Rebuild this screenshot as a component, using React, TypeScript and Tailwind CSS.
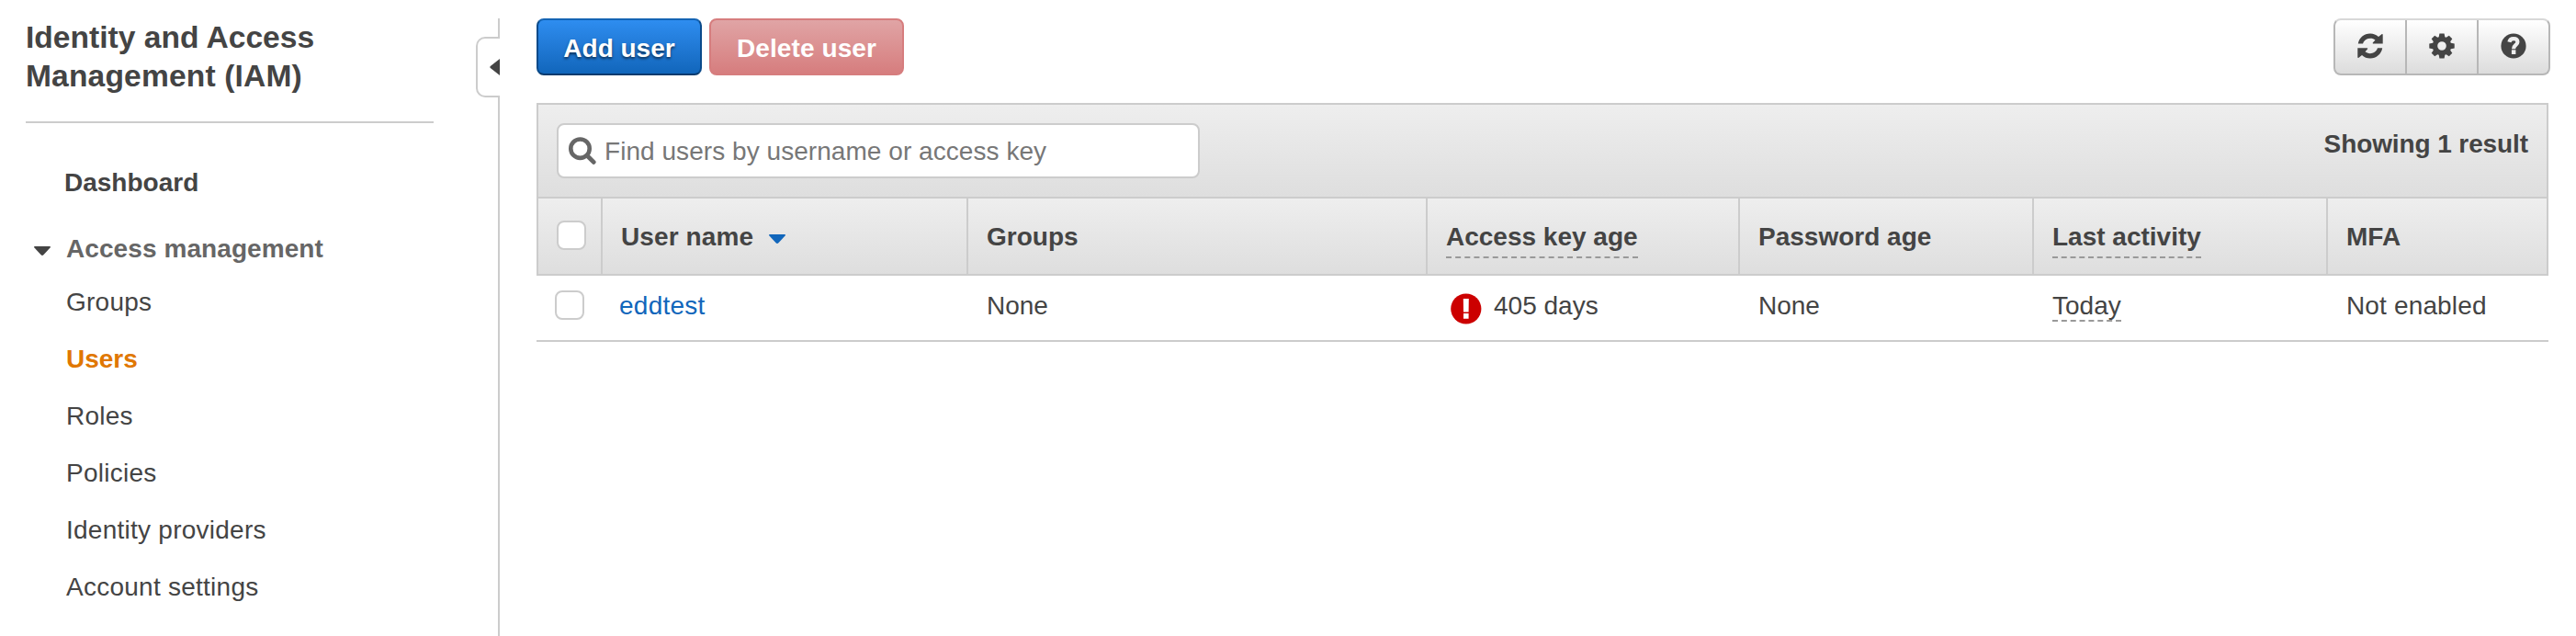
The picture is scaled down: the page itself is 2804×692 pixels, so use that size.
import { useState } from "react";

interface NavItem {
  label: string;
  active?: boolean;
}

interface User {
  name: string;
  groups: string;
  keyAge: string;
  passwordAge: string;
  lastActivity: string;
  mfa: string;
}

const NAV_ITEMS: NavItem[] = [
  { label: "Groups" },
  { label: "Users", active: true },
  { label: "Roles" },
  { label: "Policies" },
  { label: "Identity providers" },
  { label: "Account settings" },
];

const USERS: User[] = [
  {
    name: "eddtest",
    groups: "None",
    keyAge: "405 days",
    passwordAge: "None",
    lastActivity: "Today",
    mfa: "Not enabled",
  },
];

const COLUMNS = "grid grid-cols-[72px_398px_500px_340px_320px_320px_240px]";

const CaretDown = ({ className }: { className: string }) => (
  <svg viewBox="0 0 18 10" className={`h-[10px] w-[18px] ${className}`} fill="currentColor">
    <path d="M1 0h16q1.6.4.6 1.6L10.4 9.2q-1.4 1.4-2.8 0L.4 1.6Q-.6.4 1 0z" />
  </svg>
);

const SearchIcon = () => (
  <svg viewBox="0 0 30 30" className="h-[30px] w-[30px] text-[#666]" fill="none" stroke="currentColor">
    <circle cx="12.5" cy="12.7" r="10.2" strokeWidth="4.6" />
    <path d="M20 20.2L27.2 27.4" strokeWidth="4.8" strokeLinecap="round" />
  </svg>
);

const RefreshIcon = () => (
  <svg viewBox="0 0 28 28" className="h-7 w-7" fill="currentColor">
    <path d="M.8 11.500C1.800 5 7.400.5 14 .5c3.500 0 6.600 1.300 9 3.600l3.500-2.900c.6-.5 1.200-.2 1.200.5V11.500H17.500c-.8 0-1-.7-.5-1.200l2.500-2.700A8.500 8.500 0 0 0 6 11.500z" />
    <path d="M27.200 16.200C26.200 22.800 20.600 27.500 14 27.500c-3.500 0-6.600-1.300-9-3.600l-3.500 2.900c-.6.5-1.200.2-1.200-.5V16.200h10.200c.8 0 1 .7.500 1.200l-2.500 2.900A8.500 8.500 0 0 0 22 16.200z" />
  </svg>
);

const GearIcon = () => (
  <svg viewBox="-14 -14 28 28" className="h-7 w-7" fill="currentColor">
    <path
      fillRule="evenodd"
      d="M-2.600-13.500H2.600L3.300-9.800 4.700-9.200 7.800-11.300 11.300-7.800 9.200-4.700 9.800-3.300 13.700-2.600V2.600L9.800 3.300 9.200 4.700 11.300 7.800 7.800 11.300 4.700 9.200 3.300 9.800 2.600 13.500H-2.600L-3.300 9.800-4.700 9.200-7.800 11.300-11.300 7.800-9.200 4.700-9.800 3.300-13.700 2.600V-2.600L-9.800-3.300-9.200-4.700-11.300-7.800-7.800-11.300-4.700-9.200-3.300-9.800zM0-4.800A4.800 4.800 0 1 0 0 4.800 4.800 4.800 0 1 0 0-4.800z"
    />
  </svg>
);

const HelpIcon = () => (
  <svg viewBox="0 0 28 28" className="h-7 w-7">
    <circle cx="14" cy="14" r="13.600" fill="currentColor" />
    <path
      d="M9.400 9.800C9.900 7.400 11.500 6.200 14 6.200c2.700 0 4.400 1.300 4.400 3.500 0 3.400-4.300 3.200-4.300 7.500"
      fill="none"
      stroke="#eee"
      strokeWidth="4.200"
    />
    <path d="M11.900 18.300h4.500v4.700h-4.500z" fill="#eee" />
  </svg>
);

const AlertIcon = () => (
  <svg viewBox="0 0 34 34" className="h-[34px] w-[34px]">
    <circle cx="16.800" cy="17" r="16.600" fill="#c00" />
    <path d="M13.800 6h6l-.2 14.600h-5.600zM14 22h5.600v5.800H14z" fill="#fff" />
  </svg>
);

const Checkbox = ({ label }: { label: string }) => {
  const [checked, setChecked] = useState(false);
  return (
    <input
      type="checkbox"
      aria-label={label}
      checked={checked}
      onChange={() => setChecked(!checked)}
      className="block h-8 w-8 appearance-none rounded-[8px] border-2 border-[#ccc] bg-white checked:bg-[#1166bb]"
    />
  );
};

const DashedLabel = ({ text, className }: { text: string; className: string }) => (
  <span className={`border-b-2 border-dashed border-[#999] ${className}`}>{text}</span>
);

const Sidebar = () => (
  <aside className="w-[518px] shrink-0 pl-7 pt-5">
    <h1 className="h-28 w-[400px] text-[33.6px] font-bold leading-[42px]">
      Identity and Access <span className="tracking-[0.15px]">Management (IAM)</span>
    </h1>
    <hr className="w-[444px] border-0 border-t-2 border-[#ccc]" />
    <nav className="pt-[34px]">
      <a className="block pl-[42px] font-bold leading-[62px]">Dashboard</a>
      <div className="mt-[10px] flex h-[58px] pl-[9px] font-bold leading-[62px] text-[#666]">
        <CaretDown className="mr-[17px] mt-[28px] text-[#444]" />
        <span className="tracking-[0.08px]">Access management</span>
      </div>
      <ul className="pl-[44px]">
        {NAV_ITEMS.map((item) => (
          <li
            key={item.label}
            className={`leading-[62px] ${
              item.active ? "font-bold text-[#e07700]" : "tracking-[0.25px]"
            }`}
          >
            {item.label}
          </li>
        ))}
      </ul>
    </nav>
  </aside>
);

const Divider = () => (
  <div className="flex w-[26px] shrink-0 flex-col pt-5">
    <div className="h-5 w-full border-r-2 border-[#ccc]" />
    <button
      type="button"
      aria-label="Collapse"
      className="flex h-[66px] w-full items-center justify-end rounded-l-[10px] border-y-2 border-l-2 border-[#ccc]"
    >
      <svg viewBox="0 0 11 18" className="h-[18px] w-[11px]" fill="#444">
        <path d="M11 0v18L.8 10Q-.2 9 .8 8z" />
      </svg>
    </button>
    <div className="w-full flex-1 border-r-2 border-[#ccc]" />
  </div>
);

const Toolbar = () => (
  <div className="flex h-[62px] justify-between">
    <div className="flex gap-2">
      <button
        type="button"
        className="w-[180px] rounded-[8px] border-2 border-[#0a4a8a] border-t-[#1464b4] border-b-[#083a6e] bg-linear-to-b from-[#2e8df0] to-[#1166bb] pt-[3px] font-bold text-white [text-shadow:0_2px_3px_rgba(0,0,0,0.6)]"
      >
        Add user
      </button>
      <button
        type="button"
        className="w-[212px] rounded-[8px] border-2 border-[#d67d7e] bg-linear-to-b from-[#e0a4a5] to-[#d67d7e] pt-[3px] font-bold tracking-[0.1px] text-white"
      >
        Delete user
      </button>
    </div>
    <div className="mr-[-2px] flex w-[236px] rounded-[8px] border-2 border-[#b7b7b7] border-t-[#d8d8d8] bg-linear-to-b from-white to-[#dcdcdc]">
      <button
        type="button"
        aria-label="Refresh"
        className="flex w-[78px] items-center justify-center border-r-2 border-[#b7b7b7] pb-[2px]"
      >
        <RefreshIcon />
      </button>
      <button
        type="button"
        aria-label="Settings"
        className="flex w-[78px] items-center justify-center border-r-2 border-[#b7b7b7] pb-[2px]"
      >
        <GearIcon />
      </button>
      <button type="button" aria-label="Help" className="flex flex-1 items-center justify-center pb-[2px]">
        <HelpIcon />
      </button>
    </div>
  </div>
);

const HEADER_CELL = "border-r-2 border-[#ccc] pl-5 leading-[84px]";

const UserTable = () => (
  <div className="mt-[30px]">
    <div className="flex h-[104px] justify-between border-2 border-[#ccc] bg-linear-to-b from-[#eee] to-[#dedede] px-5 pt-5">
      <div className="flex h-[60px] w-[700px] items-center gap-[9px] rounded-[8px] border-2 border-[#ccc] bg-white pl-[11px]">
        <SearchIcon />
        <input
          type="text"
          placeholder="Find users by username or access key"
          className="h-full flex-1 bg-transparent pt-[2px] tracking-[0.05px] outline-none placeholder:text-[#777]"
        />
      </div>
      <span className="font-bold leading-[46px] tracking-[-0.1px]">Showing 1 result</span>
    </div>

    <div className={`${COLUMNS} h-[84px] border-b-2 border-[#ccc] bg-linear-to-b from-[#eee] to-[#dedede] font-bold`}>
      <div className="border-x-2 border-[#ccc] pl-5 pt-6">
        <Checkbox label="Select all" />
      </div>
      <div className={`${HEADER_CELL} flex items-start`}>
        <span className="tracking-[0.1px]">User name</span>
        <CaretDown className="ml-[17px] mt-[39px] text-[#1166bb]" />
      </div>
      <div className={HEADER_CELL}>Groups</div>
      <div className={HEADER_CELL}>
        <DashedLabel text="Access key age" className="pb-[6px]" />
      </div>
      <div className={HEADER_CELL}>Password age</div>
      <div className={HEADER_CELL}>
        <DashedLabel text="Last activity" className="pb-[6px]" />
      </div>
      <div className={HEADER_CELL}>MFA</div>
    </div>

    {USERS.map((user) => (
      <div key={user.name} className={`${COLUMNS} h-[72px] border-b-2 border-[#ccc] leading-[66px]`}>
        <div className="pl-5 pt-4">
          <Checkbox label={user.name} />
        </div>
        <a className="pl-[18px] tracking-[0.25px] text-[#1166bb]">{user.name}</a>
        <div className="pl-5">{user.groups}</div>
        <div className="flex pl-[25px]">
          <span className="mr-[13px] mt-[19px]">
            <AlertIcon />
          </span>
          {user.keyAge}
        </div>
        <div className="pl-5">{user.passwordAge}</div>
        <div className="pl-5">
          <DashedLabel text={user.lastActivity} className="pb-0" />
        </div>
        <div className="pl-5 tracking-[0.15px]">{user.mfa}</div>
      </div>
    ))}
  </div>
);

export default function App() {
  return (
    <div className="flex h-[692px] w-[2804px] overflow-hidden bg-white font-['Liberation_Sans',Arial,sans-serif] text-[28px] text-[#444]">
      <Sidebar />
      <Divider />
      <main className="w-[2230px] pl-10 pt-5">
        <Toolbar />
        <UserTable />
      </main>
    </div>
  );
}
